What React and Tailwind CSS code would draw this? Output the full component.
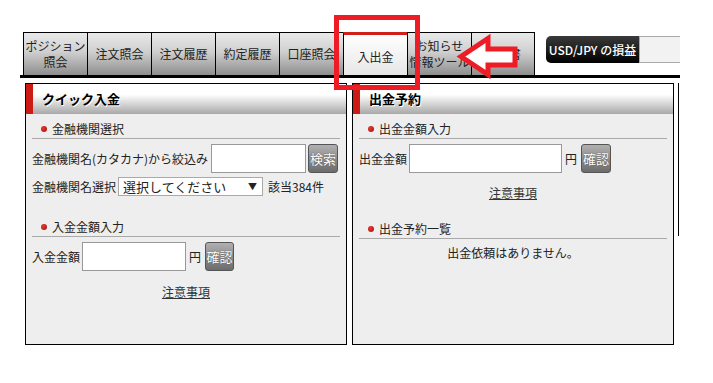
import React from 'react';

const tabs = [
  { label: ['ポジション', '照会'] },
  { label: ['注文照会'] },
  { label: ['注文履歴'] },
  { label: ['約定履歴'] },
  { label: ['口座照会'] },
  { label: ['入出金'], active: true },
  { label: ['お知らせ', '情報ツール'] },
  { label: ['報告書'] },
];

const Tab = ({ label, active, last }) => (
  <div
    className={`w-[64px] h-[43px] flex flex-col items-center justify-center border-l border-black text-[12px] leading-[16px] text-[#222] ${
      last ? 'border-r' : ''
    } ${
      active
        ? 'border-t-[3px] border-t-[#d0201a] pt-[4px] bg-[linear-gradient(to_bottom,#ffffff,#e6e6e6)]'
        : 'border-t bg-[linear-gradient(to_bottom,#e9e9e9_0%,#cfcfcf_45%,#8e8e8e_100%)]'
    }`}
  >
    {label.map((l) => (
      <span key={l}>{l}</span>
    ))}
  </div>
);

const PanelHeader = ({ title }) => (
  <div className="h-[30px] flex items-stretch bg-[linear-gradient(to_bottom,#ffffff_0%,#ffffff_35%,#a8a8a8_100%)]">
    <div className="w-[7px] bg-[#cc1b14]" />
    <div className="pl-[9px] flex items-center font-bold text-[13px] text-black [text-shadow:1px_1px_0_#fff]">
      {title}
    </div>
  </div>
);

const SectionHead = ({ title, className = '' }) => (
  <div className={`h-[20px] flex items-center gap-[5px] pl-[9px] border-b border-[#a9a9a9] text-[12px] ${className}`}>
    <span className="w-[6px] h-[6px] rounded-full bg-[radial-gradient(circle_at_35%_35%,#e53a30,#a50d0a)]" />
    <span>{title}</span>
  </div>
);

const GrayButton = ({ children, className = '' }) => (
  <button
    className={`h-[29px] rounded-[3px] border border-[#555] bg-[linear-gradient(to_bottom,#b0b0b0,#6c6c6c)] text-white text-[13px] leading-none [text-shadow:0_0_1px_#333] ${className}`}
  >
    {children}
  </button>
);

const TextInput = ({ className = '' }) => (
  <input type="text" className={`h-[29px] bg-white border border-[#999] outline-none ${className}`} />
);

export default function App() {
  return (
    <div className="w-[713px] h-[383px] bg-white relative overflow-hidden font-['Noto_Sans_CJK_JP',sans-serif] text-[12px] text-[#222]">
      <div className="pt-[32px] pl-[20px] w-[680px]">
        {/* tabs */}
        <div className="flex items-start pl-[3px] h-[43px]">
          {tabs.map((t, i) => (
            <Tab key={i} label={t.label} active={t.active} last={i === tabs.length - 1} />
          ))}
          <div className="ml-auto mt-[4px] flex h-[27px]">
            <div className="w-[93px] rounded-l-[5px] bg-[linear-gradient(to_bottom,#3a3a3a,#000)] text-white font-medium text-[12px] flex items-center justify-center">
              USD/JPY の損益
            </div>
            <div className="w-[41px] bg-[#f2f2f2] border border-r-0 border-[#aaa]" />
          </div>
        </div>
        <div className="h-[3px] bg-black" />

        {/* panels */}
        <div className="flex items-start pt-[5px] pl-[5px]">
          <div className="w-[322px] h-[262px] border border-black bg-[#eeeeee]">
            <PanelHeader title="クイック入金" />
            <div className="px-[6px] pt-[5px]">
              <SectionHead title="金融機関選択" />
              <div className="mt-[5px] flex items-center h-[29px]">
                <span>金融機関名(カタカナ)から絞込み</span>
                <TextInput className="ml-[3px] w-[95px]" />
                <GrayButton className="ml-[2px] w-[30px]">検索</GrayButton>
              </div>
              <div className="mt-[4px] flex items-center h-[19px]">
                <span>金融機関名選択</span>
                <div className="ml-[2px] w-[145px] h-[19px] bg-white border border-[#a9a9a9] flex items-center justify-between pl-[4px] pr-[5px] text-[13px] leading-none">
                  <span>選択してください</span>
                  <span className="text-[9px]">▼</span>
                </div>
                <span className="ml-[5px]">該当384件</span>
              </div>
              <SectionHead title="入金金額入力" className="mt-[21px]" />
              <div className="mt-[5px] flex items-center h-[29px]">
                <span>入金金額</span>
                <TextInput className="ml-[2px] w-[104px]" />
                <span className="ml-[3px]">円</span>
                <GrayButton className="ml-[4px] w-[29px]">確認</GrayButton>
              </div>
              <div className="mt-[12px] text-center">
                <a className="underline text-[#333]">注意事項</a>
              </div>
            </div>
          </div>

          <div className="ml-[5px] w-[322px] h-[262px] border border-black bg-[#eeeeee]">
            <PanelHeader title="出金予約" />
            <div className="px-[6px] pt-[5px]">
              <SectionHead title="出金金額入力" />
              <div className="mt-[5px] flex items-center h-[29px]">
                <span>出金金額</span>
                <TextInput className="ml-[2px] w-[153px]" />
                <span className="ml-[3px]">円</span>
                <GrayButton className="ml-[4px] w-[30px]">確認</GrayButton>
              </div>
              <div className="mt-[11px] text-center">
                <a className="underline text-[#333]">注意事項</a>
              </div>
              <SectionHead title="出金予約一覧" className="mt-[17px]" />
              <div className="mt-[5px] text-center">出金依頼はありません。</div>
            </div>
          </div>

          <div className="ml-[4px] h-[153px] border-l border-black" />
        </div>
      </div>

      {/* annotation overlays */}
      <div className="absolute left-[334px] top-[15px] w-[86px] h-[75px] border-[5px] border-[#ee1c24]" />
      <svg className="absolute left-0 top-0" width="713" height="383" viewBox="0 0 713 383">
        <polygon
          points="461,56.5 488,38.5 488,49 515,49 515,65 488,65 488,74.5"
          fill="#ffffff"
          stroke="#ee1c24"
          strokeWidth="5"
          strokeLinejoin="miter"
        />
      </svg>
    </div>
  );
}
